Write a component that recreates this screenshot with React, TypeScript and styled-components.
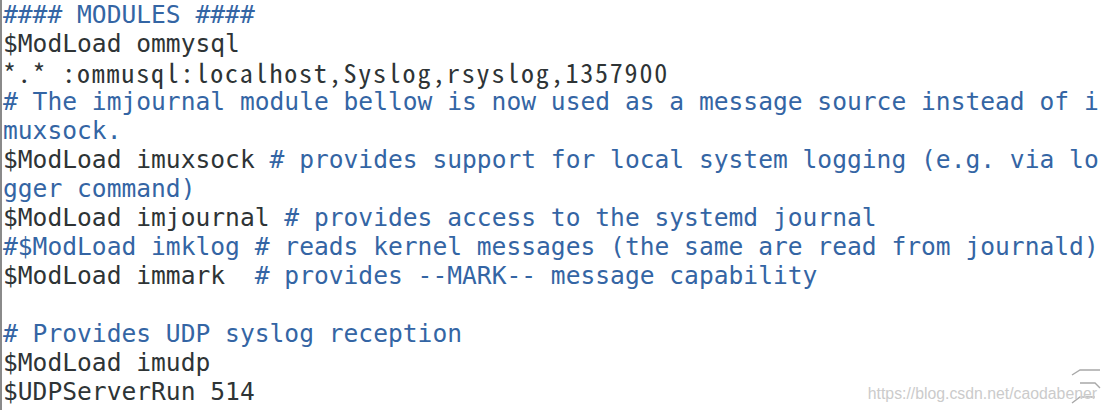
import React from "react";
import styled, { createGlobalStyle } from "styled-components";

const Global = createGlobalStyle`
  html, body { margin: 0; padding: 0; background: #ffffff; }
  #root { width: 1106px; height: 410px; overflow: hidden; }
`;

const Terminal = styled.div`
  position: relative;
  box-sizing: border-box;
  width: 1106px;
  height: 410px;
  border-left: 2px solid #8a8a8a;
  padding: 0 0 0 1px;
  background: #ffffff;
  font-family: "DejaVu Sans Mono", "Liberation Mono", monospace;
  font-size: 24.6px;
  color: #2e3436;
  overflow: hidden;
`;

const Line = styled.div`
  height: 29px;
  line-height: 29px;
  white-space: pre;
`;

const WideLine = styled(Line)`
  font-family: "Noto Sans Mono CJK SC", "Noto Sans Mono CJK JP", "DejaVu Sans Mono", monospace;
  font-size: 26px;
  letter-spacing: 1.8px;
  line-height: 28px;
`;

const Comment = styled.span`
  color: #3465a4;
`;

const Watermark = styled.div`
  position: absolute;
  right: 9px;
  bottom: 7px;
  font-family: "Liberation Sans", Arial, sans-serif;
  font-size: 15.8px;
  line-height: 18px;
  color: #cbcbcb;
  text-shadow: 0 0 1px #ffffff;
  white-space: nowrap;
`;

const Logo = styled.svg`
  position: absolute;
  left: 1066px;
  top: 366px;
`;

export default function App() {
  return (
    <>
      <Global />
      <Terminal>
        <Line>
          <Comment>#### MODULES ####</Comment>
        </Line>
        <Line>$ModLoad ommysql</Line>
        <WideLine>*.* :ommusql:localhost,Syslog,rsyslog,1357900</WideLine>
        <Line>
          <Comment># The imjournal module bellow is now used as a message source instead of i</Comment>
        </Line>
        <Line>
          <Comment>muxsock.</Comment>
        </Line>
        <Line>
          $ModLoad imuxsock<Comment> # provides support for local system logging (e.g. via lo</Comment>
        </Line>
        <Line>
          <Comment>gger command)</Comment>
        </Line>
        <Line>
          $ModLoad imjournal<Comment> # provides access to the systemd journal</Comment>
        </Line>
        <Line>
          <Comment>#$ModLoad imklog # reads kernel messages (the same are read from journald)</Comment>
        </Line>
        <Line>
          $ModLoad immark<Comment>  # provides --MARK-- message capability</Comment>
        </Line>
        <Line> </Line>
        <Line>
          <Comment># Provides UDP syslog reception</Comment>
        </Line>
        <Line>$ModLoad imudp</Line>
        <Line>$UDPServerRun 514</Line>
        <Logo width="36" height="40" viewBox="0 0 36 40">
          <path d="M4 9 L12 4 L32 4" fill="none" stroke="#a8a8a8" strokeWidth="1.4" />
          <path d="M12 17 L27 17 L32 22" fill="none" stroke="#a8a8a8" strokeWidth="1.4" />
          <path d="M4 37 L12 31 L27 31" fill="none" stroke="#a8a8a8" strokeWidth="1.4" />
        </Logo>
        <Watermark>https://blog.csdn.net/caodabener</Watermark>
      </Terminal>
    </>
  );
}
